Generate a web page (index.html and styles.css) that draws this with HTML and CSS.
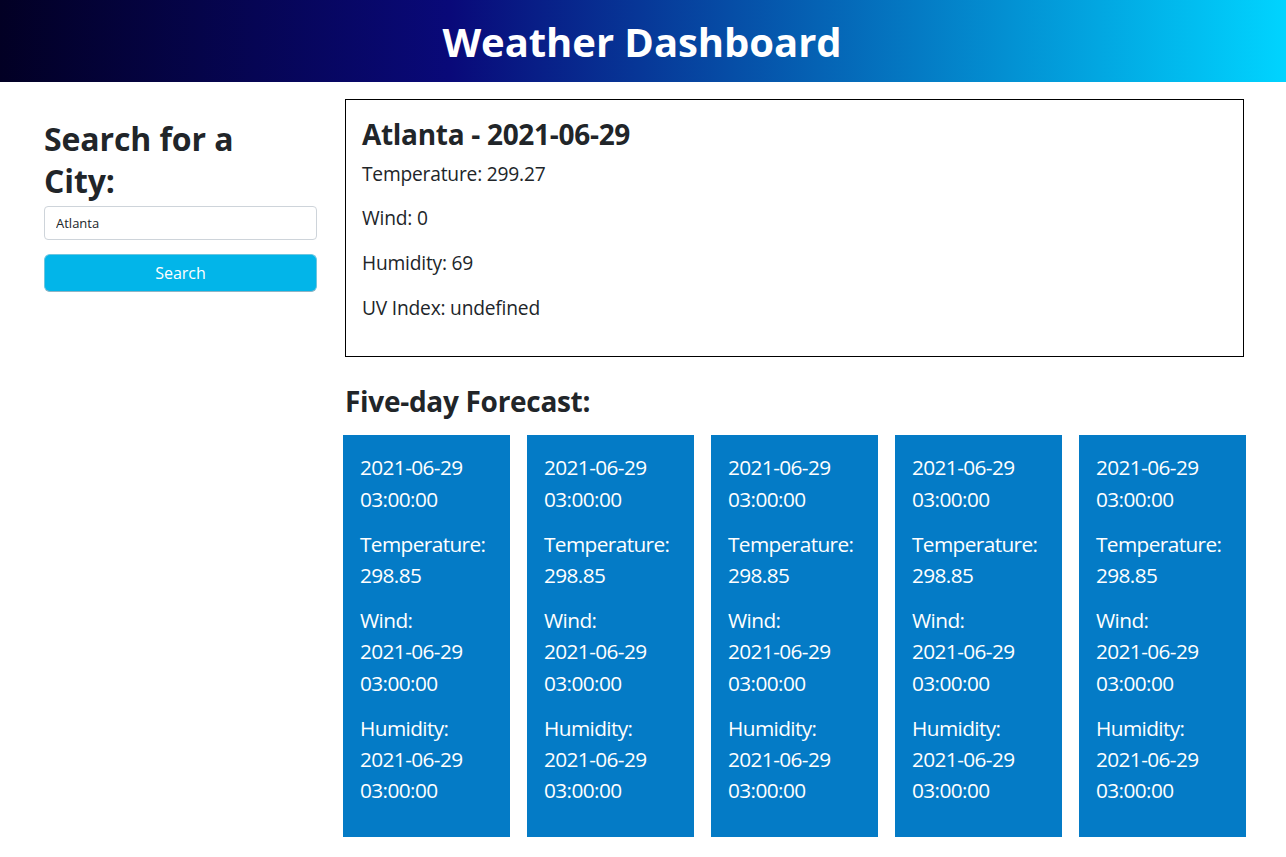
FILE: index.html
```html
<!DOCTYPE html>
<html lang="en">
<head>
<meta charset="utf-8">
<title>Weather Dashboard</title>
<link rel="stylesheet" href="styles.css">
</head>
<body>
<header class="banner">
  <h1 class="banner-title">Weather Dashboard</h1>
</header>
<main class="layout">
  <aside class="search-col">
    <h2 class="search-title">Search for a City:</h2>
    <input class="search-input" type="text" value="Atlanta">
    <button class="search-btn" type="button">Search</button>
  </aside>
  <section class="content-col">
    <div class="today">
      <h3 class="today-title">Atlanta - 2021-06-29</h3>
      <p class="today-line">Temperature: 299.27</p>
      <p class="today-line">Wind: 0</p>
      <p class="today-line">Humidity: 69</p>
      <p class="today-line">UV Index: undefined</p>
    </div>
    <h3 class="forecast-title">Five-day Forecast:</h3>
    <div class="forecast">
      <div class="day-card">
        <p><span class="nb">2021-06-29</span> <span class="nb">03:00:00</span></p>
        <p>Temperature: 298.85</p>
        <p>Wind: <span class="nb">2021-06-29</span> <span class="nb">03:00:00</span></p>
        <p>Humidity: <span class="nb">2021-06-29</span> <span class="nb">03:00:00</span></p>
      </div>
      <div class="day-card">
        <p><span class="nb">2021-06-29</span> <span class="nb">03:00:00</span></p>
        <p>Temperature: 298.85</p>
        <p>Wind: <span class="nb">2021-06-29</span> <span class="nb">03:00:00</span></p>
        <p>Humidity: <span class="nb">2021-06-29</span> <span class="nb">03:00:00</span></p>
      </div>
      <div class="day-card">
        <p><span class="nb">2021-06-29</span> <span class="nb">03:00:00</span></p>
        <p>Temperature: 298.85</p>
        <p>Wind: <span class="nb">2021-06-29</span> <span class="nb">03:00:00</span></p>
        <p>Humidity: <span class="nb">2021-06-29</span> <span class="nb">03:00:00</span></p>
      </div>
      <div class="day-card">
        <p><span class="nb">2021-06-29</span> <span class="nb">03:00:00</span></p>
        <p>Temperature: 298.85</p>
        <p>Wind: <span class="nb">2021-06-29</span> <span class="nb">03:00:00</span></p>
        <p>Humidity: <span class="nb">2021-06-29</span> <span class="nb">03:00:00</span></p>
      </div>
      <div class="day-card">
        <p><span class="nb">2021-06-29</span> <span class="nb">03:00:00</span></p>
        <p>Temperature: 298.85</p>
        <p>Wind: <span class="nb">2021-06-29</span> <span class="nb">03:00:00</span></p>
        <p>Humidity: <span class="nb">2021-06-29</span> <span class="nb">03:00:00</span></p>
      </div>
    </div>
  </section>
</main>
</body>
</html>
```
FILE: styles.css
```css
* { box-sizing: border-box; }

body {
  margin: 0;
  font-family: "Open Sans", "Noto Sans", sans-serif;
  font-size: 16px;
  line-height: 1.5;
  color: #212529;
  background: #fff;
}

.banner {
  height: 82px;
  background: linear-gradient(90deg, #020024 0%, #090979 35%, #00d4ff 100%);
  display: flex;
  align-items: center;
  justify-content: center;
}

.banner-title {
  margin: 0 0 0 -2px;
  padding-top: 2px;
  color: #fff;
  font-size: 40px;
  font-weight: 700;
  line-height: 1.2;
  letter-spacing: -0.05px;
}

.layout {
  display: flex;
  gap: 28px;
  padding: 17px 42px 0 44px;
}

.search-col {
  width: 273px;
  flex: none;
  padding-top: 19px;
}

.search-title {
  max-width: 240px;
  margin: 0 0 5px;
  font-size: 32px;
  font-weight: 700;
  line-height: 1.3;
  letter-spacing: -0.1px;
}

.search-input {
  display: block;
  width: 100%;
  height: 34px;
  padding: 4px 11px;
  font-family: inherit;
  font-size: 13px;
  color: #212529;
  border: 1px solid #ced4da;
  border-radius: 4px;
}

.search-btn {
  display: block;
  width: 100%;
  height: 38px;
  margin-top: 14px;
  font-family: inherit;
  font-size: 16px;
  color: #fff;
  background: #02b5e9;
  border: 1px solid #6cc6e0;
  border-bottom-color: #8fb4c4;
  border-radius: 6px;
}

.content-col {
  width: 899px;
  flex: none;
}

.today {
  border: 1px solid #000;
  padding: 18px 16px 17px;
}

.today-title {
  margin: 0 0 8px;
  font-size: 28px;
  font-weight: 700;
  line-height: 1.2;
  letter-spacing: -0.3px;
}

.today-line {
  margin: 0 0 16px;
  font-size: 19.2px;
  line-height: 1.5;
  letter-spacing: -0.2px;
}

.forecast-title {
  margin: 28px 0 17px;
  font-size: 28px;
  font-weight: 700;
  line-height: 1.2;
  letter-spacing: -0.3px;
}

.forecast {
  display: flex;
  gap: 17px;
  margin: 0 -2px;
}

.day-card {
  width: 167px;
  flex: none;
  background: #047bc6;
  color: #fff;
  padding: 17px 17px 17px;
}

.day-card p {
  margin: 0 0 14px;
  font-size: 20.8px;
  line-height: 1.5;
  letter-spacing: -0.6px;
}

.nb { white-space: nowrap; }
```
